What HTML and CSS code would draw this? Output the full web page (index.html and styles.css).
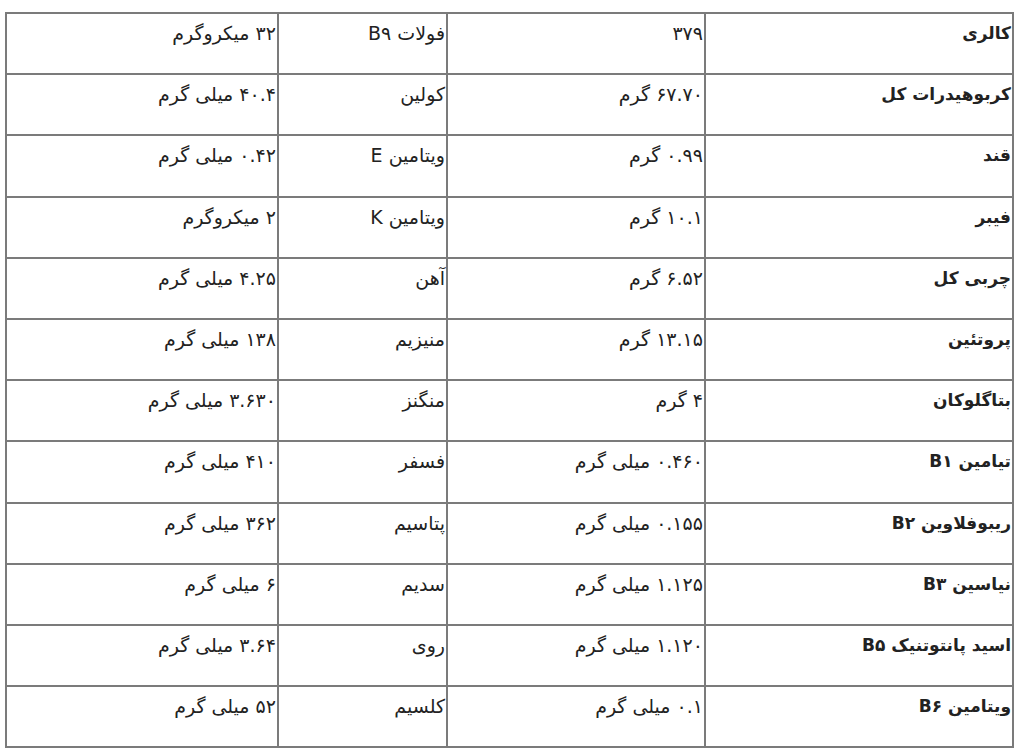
FILE: index.html
```html
<!DOCTYPE html>
<html lang="fa" dir="rtl">
<head>
<meta charset="utf-8">
<link rel="stylesheet" href="styles.css">
</head>
<body>
<table class="nutri">
<colgroup>
<col class="c1"><col class="c2"><col class="c3"><col class="c4">
</colgroup>
<tbody>
<tr><td class="name">کالری</td><td>۳۷۹</td><td>فولات B۹</td><td>۳۲ میکروگرم</td></tr>
<tr><td class="name">کربوهیدرات کل</td><td>۶۷.۷۰ گرم</td><td>کولین</td><td>۴۰.۴ میلی گرم</td></tr>
<tr><td class="name">قند</td><td>۰.۹۹ گرم</td><td>ویتامین E</td><td>۰.۴۲ میلی گرم</td></tr>
<tr><td class="name">فیبر</td><td>۱۰.۱ گرم</td><td>ویتامین K</td><td>۲ میکروگرم</td></tr>
<tr><td class="name">چربی کل</td><td>۶.۵۲ گرم</td><td>آهن</td><td>۴.۲۵ میلی گرم</td></tr>
<tr><td class="name">پروتئین</td><td>۱۳.۱۵ گرم</td><td>منیزیم</td><td>۱۳۸ میلی گرم</td></tr>
<tr><td class="name">بتاگلوکان</td><td>۴ گرم</td><td>منگنز</td><td>۳.۶۳۰ میلی گرم</td></tr>
<tr><td class="name">تیامین B۱</td><td>۰.۴۶۰ میلی گرم</td><td>فسفر</td><td>۴۱۰ میلی گرم</td></tr>
<tr><td class="name">ریبوفلاوین B۲</td><td>۰.۱۵۵ میلی گرم</td><td>پتاسیم</td><td>۳۶۲ میلی گرم</td></tr>
<tr><td class="name">نیاسین B۳</td><td>۱.۱۲۵ میلی گرم</td><td>سدیم</td><td>۶ میلی گرم</td></tr>
<tr><td class="name">اسید پانتوتنیک B۵</td><td>۱.۱۲۰ میلی گرم</td><td>روی</td><td>۳.۶۴ میلی گرم</td></tr>
<tr><td class="name">ویتامین B۶</td><td>۰.۱ میلی گرم</td><td>کلسیم</td><td>۵۲ میلی گرم</td></tr>
</tbody>
</table>
</body>
</html>
```
FILE: styles.css
```css
html, body {
  margin: 0;
  padding: 0;
  background: #ffffff;
}
body {
  font-family: "DejaVu Sans", "Noto Sans", sans-serif;
  color: #222222;
  padding: 12px 10px 0 7px;
}
.nutri {
  width: 1007px;
  border-collapse: collapse;
  table-layout: fixed;
  font-size: 19px;
}
.c1 { width: 308px; }
.c2 { width: 258px; }
.c3 { width: 169px; }
.c4 { width: 272px; }
.nutri td {
  border: 2px solid #7b7b7b;
  height: 61.2px;
  padding: 5px 1px 0 0;
  vertical-align: top;
  text-align: right;
  line-height: 28px;
  box-sizing: border-box;
}
.nutri td.name {
  font-weight: bold;
  font-size: 17px;
}
```
